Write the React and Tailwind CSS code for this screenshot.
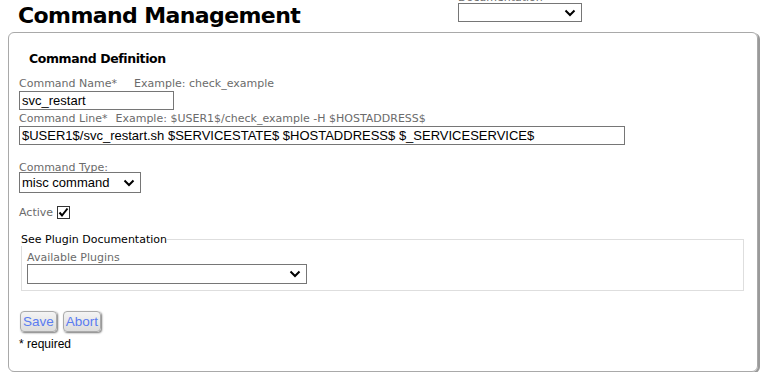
import React from 'react';

const Chevron = () => (
  <svg width="12" height="8" viewBox="0 0 12 8" className="shrink-0">
    <path d="M1.5 1.5 L6 6 L10.5 1.5" fill="none" stroke="#000" strokeWidth="2" />
  </svg>
);

const FakeSelect = ({ value, className }) => (
  <div className={`flex items-center justify-between border border-[#767676] bg-white pl-[2px] pr-[5px] text-[13px] text-black ${className}`}>
    <span>{value}</span>
    <Chevron />
  </div>
);

const label = "text-[11px] leading-[13px] text-[#6b6b6b] font-['DejaVu_Sans',sans-serif]";

export default function App() {
  return (
    <div className="w-[761px] h-[372px] overflow-hidden bg-white font-['Liberation_Sans',Arial,sans-serif]">
      {/* Header */}
      <div className="flex h-[32px]">
        <h1 className="ml-[18px] mt-[3px] text-[22px] leading-[26px] font-bold tracking-[-0.6px] text-black font-['DejaVu_Sans',sans-serif]">
          Command Management
        </h1>
        <div className="ml-auto mr-[179px] -mt-[9px] flex flex-col">
          <span className={label}>Documentation</span>
          <FakeSelect value="" className="w-[124px] h-[19px] mt-[-1px] border-[#6b6b6b]" />
        </div>
      </div>

      {/* Panel */}
      <div className="mx-[8px] mr-[3px] h-[340px] rounded-[6px] border border-[#a9a9a9] shadow-[2px_1px_0_#9a9a9a] pl-[10px] pr-[12px]">
        <h2 className="ml-[10px] mt-[18px] text-[12.5px] leading-[16px] font-bold tracking-[-0.4px] text-black font-['DejaVu_Sans',sans-serif]">
          Command Definition
        </h2>

        <div className={`${label} mt-[10px] flex`}>
          <span>Command Name*</span>
          <span className="ml-[17px]">Example: check_example</span>
        </div>
        <div className="mt-[1px] w-[155px] h-[19px] border border-[#767676] px-[2px] text-[13px] leading-[17px] text-black">
          svc_restart
        </div>

        <div className={`${label} mt-[2px] flex`}>
          <span>Command Line*</span>
          <span className="ml-[8px]">Example: $USER1$/check_example -H $HOSTADDRESS$</span>
        </div>
        <div className="mt-[1px] w-[606px] h-[19px] border border-[#767676] px-[2px] text-[13px] leading-[17px] text-black">
          $USER1$/svc_restart.sh $SERVICESTATE$ $HOSTADDRESS$ $_SERVICESERVICE$
        </div>

        <div className={`${label} mt-[16px]`}>Command Type:</div>
        <FakeSelect value="misc command" className="-mt-[2px] w-[122px] h-[21px]" />

        <div className="mt-[13px] flex items-center gap-[4px]">
          <span className={label}>Active</span>
          <div className="w-[13px] h-[13px] border border-[#333] flex items-center justify-center bg-white">
            <svg width="11" height="11" viewBox="0 0 11 11">
              <path d="M1.5 5.5 L4 8.5 L9.5 1.5" fill="none" stroke="#000" strokeWidth="2" />
            </svg>
          </div>
        </div>

        <fieldset className="mt-[14px] ml-[2px] mr-[1px] border border-[#dedede] px-[5px] pb-[6px]">
          <legend className="text-[11px] leading-[13px] text-black font-['DejaVu_Sans',sans-serif] -ml-[6px] px-0">
            See Plugin Documentation
          </legend>
          <div className={`${label} mt-[5px]`}>Available Plugins</div>
          <FakeSelect value="" className="mt-0 w-[280px] h-[20px]" />
        </fieldset>

        <div className="mt-[20px] ml-[1px] flex gap-[6px]">
          {['Save', 'Abort'].map((b) => (
            <button
              key={b}
              className="h-[21px] px-[2px] rounded-[4px] border border-[#aaa] bg-gradient-to-b from-[#f4f4f4] to-[#dcdcdc] shadow-[1px_1px_2px_#777] text-[13.5px] leading-[18px] text-[#5a7cf0]"
            >
              {b}
            </button>
          ))}
        </div>
        <div className="mt-[5px] text-[12px] leading-[14px] text-black">* required</div>
      </div>
    </div>
  );
}
